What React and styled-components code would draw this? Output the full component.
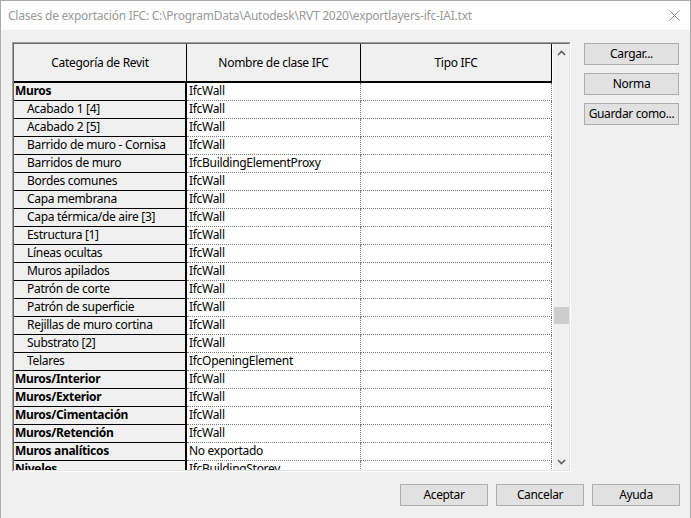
import React from "react";
import styled, { createGlobalStyle } from "styled-components";

const GlobalStyle = createGlobalStyle`
  html, body {
    margin: 0;
    padding: 0;
    background: #f0f0f0;
  }
  body {
    font-family: "Noto Sans", "Open Sans", sans-serif;
    font-size: 12px;
    letter-spacing: -0.3px;
    color: #000;
  }
`;

const Window = styled.div`
  width: 691px;
  height: 518px;
  box-sizing: border-box;
  border: 1px solid #aaaaaa;
  border-bottom: none;
  display: flex;
  flex-direction: column;
  background: #f0f0f0;
  overflow: hidden;
`;

const TitleBar = styled.div`
  height: 29px;
  flex: none;
  background: #fff;
  display: flex;
  align-items: center;
  justify-content: space-between;
  padding: 0 10px 0 7px;
`;

const Title = styled.span`
  color: #999999;
  font-size: 12px;
  letter-spacing: -0.25px;
  white-space: nowrap;
`;

const Body = styled.div`
  flex: 1;
  display: flex;
  flex-direction: column;
  padding: 12px 10px 12px 11px;
  gap: 12px;
`;

const Main = styled.div`
  display: flex;
  gap: 13px;
  align-items: flex-start;
`;

const Grid = styled.div`
  width: 559px;
  height: 430px;
  box-sizing: border-box;
  border: 1px solid;
  border-color: #a0a0a0 #ffffff #ffffff #a0a0a0;
  display: flex;
  flex: none;
`;

const GridInner = styled.div`
  flex: 1;
  display: flex;
  border: 1px solid;
  border-color: #696969 #e3e3e3 #e3e3e3 #696969;
  background: #f0f0f0;
  overflow: hidden;
`;

const Table = styled.div`
  width: 538px;
  flex: none;
  overflow: hidden;
`;

const Row = styled.div`
  display: grid;
  grid-template-columns: 173px 174px 191px;
  height: ${(p) => (p.$header ? "39px" : "18px")};
`;

const HeadCell = styled.div`
  display: flex;
  align-items: center;
  justify-content: center;
  background: #f0f0f0;
  border-right: 1px solid #000;
  border-bottom: 2px solid #000;
  box-sizing: border-box;
  padding-bottom: 1px;
`;

const CatCell = styled.div`
  background: #f0f0f0;
  border-right: 2px solid #000;
  border-bottom: 1px solid #000;
  box-sizing: border-box;
  padding-left: ${(p) => (p.$sub ? "13px" : "1px")};
  font-weight: ${(p) => (p.$sub ? 400 : 700)};
  line-height: 16px;
  white-space: nowrap;
  overflow: hidden;
`;

const ValueCell = styled.div`
  background: #fff;
  border-right: 1px dotted #7a7a7a;
  border-bottom: 1px dotted #7a7a7a;
  box-sizing: border-box;
  padding-left: 2px;
  line-height: 16px;
  white-space: nowrap;
  overflow: hidden;
`;

const ScrollBar = styled.div`
  flex: 1;
  display: flex;
  flex-direction: column;
  align-items: center;
  background: #f0f0f0;
  border-left: 1px solid #fff;
`;

const ScrollArrow = styled.div`
  height: 17px;
  width: 100%;
  display: flex;
  align-items: center;
  justify-content: center;
  flex: none;
`;

const Track = styled.div`
  flex: 1;
  width: 100%;
  display: flex;
  flex-direction: column;
  align-items: center;
`;

const Thumb = styled.div`
  width: 15px;
  height: 17px;
  background: #cdcdcd;
  flex: none;
`;

const Side = styled.div`
  display: flex;
  flex-direction: column;
  gap: 8px;
  padding-top: 1px;
`;

const Button = styled.button`
  width: ${(p) => p.$w || 95}px;
  height: ${(p) => p.$h || 22}px;
  box-sizing: border-box;
  background: #e1e1e1;
  border: 1px solid #adadad;
  font-family: "Noto Sans", "Open Sans", sans-serif;
  font-size: 12px;
  color: #000;
  padding: 0 0 2px;
  letter-spacing: -0.35px;
  white-space: nowrap;
`;

const Footer = styled.div`
  display: flex;
  justify-content: flex-end;
  gap: 8px;
`;

const Chevron = ({ up }) => (
  <svg width="9" height="6" viewBox="0 0 9 6">
    <polyline
      points={up ? "1,5 4.5,1.5 8,5" : "1,1 4.5,4.5 8,1"}
      fill="none"
      stroke="#606060"
      strokeWidth="1.6"
    />
  </svg>
);

const CloseIcon = () => (
  <svg width="11" height="11" viewBox="0 0 11 11">
    <path d="M0.5 0.5 L10.5 10.5 M10.5 0.5 L0.5 10.5" stroke="#8a8a8a" strokeWidth="1" />
  </svg>
);

const rows = [
  ["Muros", "IfcWall", false],
  ["Acabado 1 [4]", "IfcWall", true],
  ["Acabado 2 [5]", "IfcWall", true],
  ["Barrido de muro - Cornisa", "IfcWall", true],
  ["Barridos de muro", "IfcBuildingElementProxy", true],
  ["Bordes comunes", "IfcWall", true],
  ["Capa membrana", "IfcWall", true],
  ["Capa térmica/de aire [3]", "IfcWall", true],
  ["Estructura [1]", "IfcWall", true],
  ["Líneas ocultas", "IfcWall", true],
  ["Muros apilados", "IfcWall", true],
  ["Patrón de corte", "IfcWall", true],
  ["Patrón de superficie", "IfcWall", true],
  ["Rejillas de muro cortina", "IfcWall", true],
  ["Substrato [2]", "IfcWall", true],
  ["Telares", "IfcOpeningElement", true],
  ["Muros/Interior", "IfcWall", false],
  ["Muros/Exterior", "IfcWall", false],
  ["Muros/Cimentación", "IfcWall", false],
  ["Muros/Retención", "IfcWall", false],
  ["Muros analíticos", "No exportado", false],
  ["Niveles", "IfcBuildingStorey", false],
];

const App = () => {
  return (
    <>
      <GlobalStyle />
      <Window>
        <TitleBar>
          <Title>
            Clases de exportación IFC: C:\ProgramData\Autodesk\RVT 2020\exportlayers-ifc-IAI.txt
          </Title>
          <CloseIcon />
        </TitleBar>
        <Body>
          <Main>
            <Grid>
              <GridInner>
                <Table>
                  <Row $header>
                    <HeadCell>Categoría de Revit</HeadCell>
                    <HeadCell>Nombre de clase IFC</HeadCell>
                    <HeadCell>Tipo IFC</HeadCell>
                  </Row>
                  {rows.map(([cat, ifc, sub]) => (
                    <Row key={cat}>
                      <CatCell $sub={sub}>{cat}</CatCell>
                      <ValueCell>{ifc}</ValueCell>
                      <ValueCell />
                    </Row>
                  ))}
                </Table>
                <ScrollBar>
                  <ScrollArrow>
                    <Chevron up />
                  </ScrollArrow>
                  <Track>
                    <div style={{ height: 246 }} />
                    <Thumb />
                  </Track>
                  <ScrollArrow>
                    <Chevron />
                  </ScrollArrow>
                </ScrollBar>
              </GridInner>
            </Grid>
            <Side>
              <Button>Cargar...</Button>
              <Button>Norma</Button>
              <Button>Guardar como...</Button>
            </Side>
          </Main>
          <Footer>
            <Button $w={88}>Aceptar</Button>
            <Button $w={88}>Cancelar</Button>
            <Button $w={88}>Ayuda</Button>
          </Footer>
        </Body>
      </Window>
    </>
  );
};

export default App;
